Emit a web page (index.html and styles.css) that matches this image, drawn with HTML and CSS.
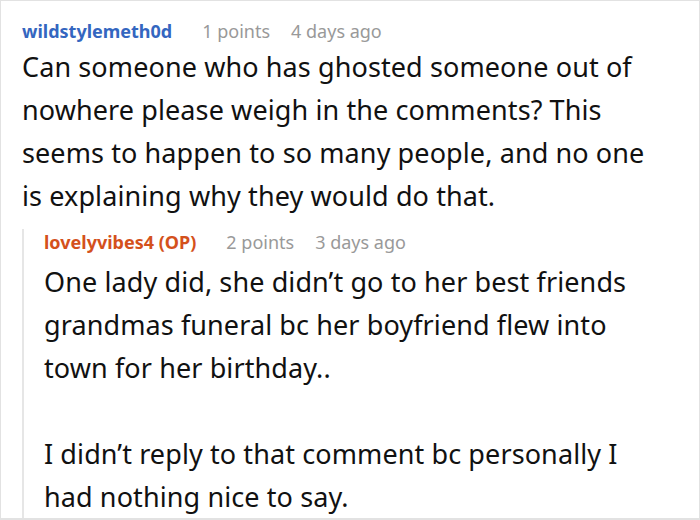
FILE: index.html
```html
<!DOCTYPE html>
<html>
<head>
<meta charset="utf-8">
<link rel="stylesheet" href="styles.css">
</head>
<body>
<div class="frame">
  <div class="comment">
    <div class="meta">
      <span class="user">wildstylemeth0d</span>
      <span class="info">1 points</span>
      <span class="info">4 days ago</span>
    </div>
    <div class="body">
      <p>Can someone who has ghosted someone out of nowhere please weigh in the comments? This seems to happen to so many people, and no one is explaining why they would do that.</p>
    </div>
    <div class="reply">
      <div class="meta">
        <span class="user op">lovelyvibes4 (OP)</span>
        <span class="info">2 points</span>
        <span class="info">3 days ago</span>
      </div>
      <div class="body">
        <p>One lady did, she didn’t go to her best friends grandmas funeral bc her boyfriend flew into town for her birthday..</p>
        <p>I didn’t reply to that comment bc personally I had nothing nice to say.</p>
      </div>
    </div>
  </div>
</div>
</body>
</html>
```
FILE: styles.css
```css
html, body {
  margin: 0;
  padding: 0;
  background: #fff;
}
.frame {
  width: 700px;
  height: 520px;
  box-sizing: border-box;
  border: 1px solid #e2e2e2;
  border-bottom-width: 2px;
  overflow: hidden;
  font-family: "Noto Sans", "Open Sans", sans-serif;
}
.comment {
  padding: 17px 0 0 21px;
}
.meta {
  display: flex;
  gap: 21px;
  font-size: 18px;
  line-height: 26px;
  align-items: baseline;
}
.user {
  font-weight: bold;
  color: #3466c0;
  margin-right: 9px;
}
.user.op {
  color: #d4511c;
}
.info {
  color: #999;
}
.body {
  font-size: 27px;
  letter-spacing: 0.1px;
  line-height: 43px;
  color: #111;
  padding-right: 37px;
}
.body p {
  margin: 0;
}
.body p + p {
  margin-top: 43px;
}
.comment > .body {
  margin-top: 1px;
}
.reply {
  margin-top: 12px;
  border-left: 2px solid #e6e6e6;
  padding-left: 20px;
}
.reply .body {
  margin-top: 5px;
}
```
